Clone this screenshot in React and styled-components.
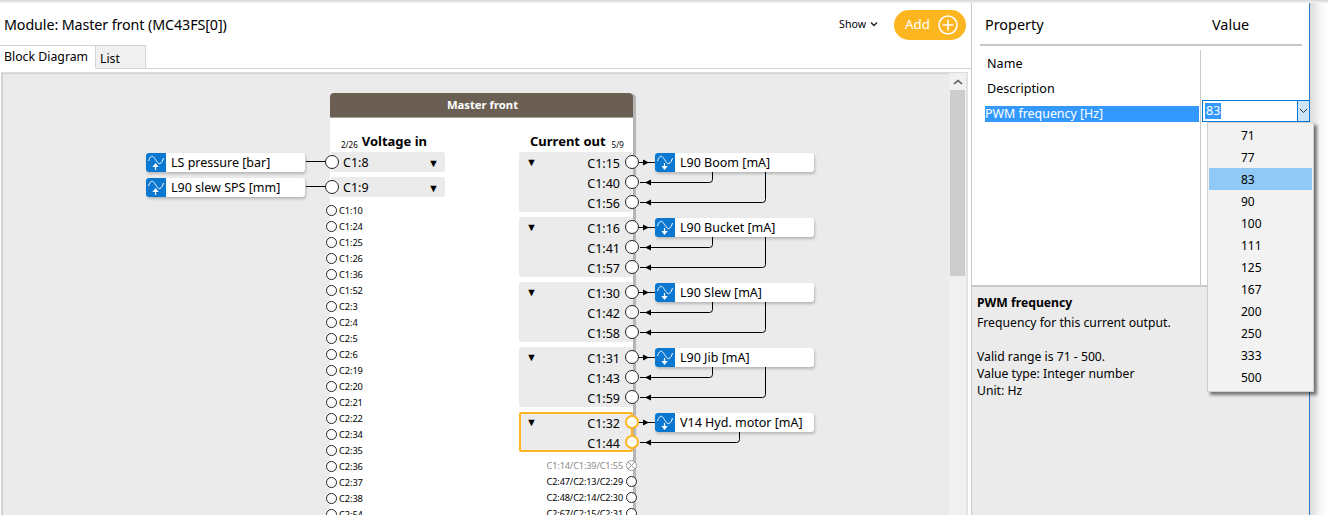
import React from 'react';
import styled, { createGlobalStyle } from 'styled-components';

const Global = createGlobalStyle`
  html, body { margin: 0; padding: 0; background: #fff; }
  body { font-family: "Noto Sans", "Open Sans", sans-serif; color: #000; }
  * { box-sizing: border-box; }
`;

const ORANGE = '#fdb61f';
const BLUE = '#0a78d1';

const Page = styled.div`
  width: 1328px; height: 515px; overflow: hidden;
  display: flex; flex-direction: column; background: #fff;
`;
const TopShade = styled.div`
  height: 3px; flex: none;
  background: linear-gradient(#d6d6d6, #f4f4f4);
`;
const Body = styled.div`flex: 1; display: flex; min-height: 0;`;
const Window = styled.div`
  width: 1310px; flex: none; display: flex;
  border-right: 1px solid #2b7cc4; background: #fff;
`;
const EdgeShade = styled.div`
  flex: 1; background: linear-gradient(90deg, #dcdcdc, #f6f6f6 55%, #fff);
`;

const LeftPane = styled.div`
  width: 972px; flex: none; display: flex; flex-direction: column;
  border-right: 1px solid #c8c8c8; min-height: 0;
`;
const Header = styled.div`
  height: 42px; flex: none; display: flex; align-items: center;
  padding: 0 5px 0 4px;
`;
const Title = styled.div`font-size: 14.3px; flex: 1; letter-spacing: -0.1px;`;
const ShowMenu = styled.div`
  display: flex; align-items: center; gap: 4px;
  font-size: 10.6px; margin-right: 16px;
`;
const AddButton = styled.div`
  width: 72px; height: 30px; border-radius: 15px; background: ${ORANGE};
  color: #fff; font-size: 13.4px; display: flex; align-items: center;
  justify-content: space-between; padding: 0 8px 2px 11px; margin-top: 2px;
`;
const Tabs = styled.div`
  height: 24px; flex: none; display: flex; align-items: flex-end;
  border-bottom: 1px solid #d4d4d4;
`;
const Tab = styled.div`
  font-size: 12.3px; height: ${p => (p.$active ? '24px' : '23px')};
  width: ${p => p.$w}px; padding: ${p => (p.$active ? '2px 0 0 4px' : '4px 0 0 4px')};
  background: ${p => (p.$active ? '#fff' : '#f0f0f0')};
  border: 1px solid #d4d4d4; border-left: none;
  border-bottom: ${p => (p.$active ? '1px solid #fff' : 'none')};
  margin-bottom: ${p => (p.$active ? '-1px' : '0')};
`;
const CanvasFrame = styled.div`
  flex: 1; min-height: 0; display: flex; margin: 3px 3px 0 1px;
  border-top: 1px solid #dcdcdc;
`;
const Canvas = styled.div`
  flex: 1; position: relative; overflow: hidden; background: #ebebeb;
  border-left: 2px solid #d2d2d2; box-shadow: inset 0 2px 1px -1px #d0d0d0;
`;
const Scrollbar = styled.div`
  width: 19px; flex: none; display: flex; flex-direction: column;
  background: #f0f0f0; border-right: 2px solid #e2e2e2; padding-right: 1px; padding-left: 1px;
`;
const ScrollUp = styled.div`height: 17px; display: flex; align-items: center; justify-content: center;`;
const ScrollThumb = styled.div`height: 186px; background: #cdcdcd;`;

const Module = styled.div`
  position: absolute; left: 327px; top: 20px; width: 303px; height: 480px;
  background: #fff; box-shadow: 3px 1px 1px #b4b4b4;
  border-radius: 4px 4px 0 0;
`;
const ModuleHead = styled.div`
  height: 25px; background: #6b5f53; color: #fff; border-radius: 4px 4px 0 0;
  font-size: 11.3px; font-weight: 700; text-align: center; line-height: 24px;
  border-bottom: 1px solid #a8a39d; padding-left: 2px;
`;
const ModuleBody = styled.div`
  display: flex; justify-content: space-between; padding-top: 14px;
`;
const Column = styled.div`width: ${p => p.$w}px; display: flex; flex-direction: column;`;
const ColTitle = styled.div`
  height: 20px; display: flex; align-items: center; gap: ${p => p.$gap}px; padding-left: 11px;
  padding-bottom: 2px;
  font-size: 13px; font-weight: 700; white-space: nowrap;
`;
const Tiny = styled.span`font-size: 8px; font-weight: 400; padding-top: 7px;`;

const Circle = styled.span`
  display: block; flex: none; border-radius: 50%; background: #fff;
  width: ${p => (p.$big ? 14 : 11)}px; height: ${p => (p.$big ? 14 : 11)}px;
  border: ${p => (p.$hot ? '2px' : p.$big ? '1.4px' : '1.2px')} solid ${p => (p.$hot ? ORANGE : '#222')};
  position: relative; z-index: 2;
`;
const InputRow = styled.div`
  position: relative; height: 20px; margin-bottom: 5px; background: #ebebeb;
  border-radius: 0 3px 3px 0; display: flex; align-items: center; font-size: 12.5px;
  margin-left: 1px;
`;
const InputPin = styled(Circle)`margin-left: -6px; margin-right: 4px;`;
const Caret = styled.span`font-size: 11px; line-height: 1;`;
const InputCaret = styled(Caret)`margin-left: auto; margin-right: 6px;`;
const SmallRow = styled.div`
  height: 16px; display: flex; align-items: center; gap: 2px; font-size: 9.3px;
  letter-spacing: -0.1px; margin-left: -4px;
`;
const Signal = styled.div`
  position: absolute; width: 159px; height: 19px; top: 1px; left: ${p => p.$left}px;
  background: #fff; border-radius: 3px; box-shadow: 1px 2px 3px rgba(0,0,0,.22);
  display: flex; align-items: center; font-size: 12.5px; gap: 5px; white-space: nowrap; z-index: 3;
`;
const SignalIcon = styled.span`
  width: 20px; height: 19px; flex: none; background: ${BLUE}; border-radius: 3px 0 0 3px;
  display: flex;
`;
const InputLine = styled.span`
  position: absolute; left: -25px; width: 20px; top: 9px; height: 1px; background: #000;
`;
const OutputGroup = styled.div`
  position: relative; height: ${p => p.$rows * 20}px; margin-bottom: 5px; background: #ebebeb;
  border-radius: 2px; padding-left: 6px;
  box-shadow: ${p => (p.$hot ? `inset 0 0 0 2px ${ORANGE}` : 'none')};
`;
const GroupCaret = styled(Caret)`position: absolute; left: 7px; top: 4px;`;
const OutputRow = styled.div`
  height: 20px; display: flex; align-items: center; justify-content: flex-end;
  gap: 5px; font-size: 12.5px; margin-right: -6px;
`;
const PinLabel = styled.span`padding-top: 2px;`;
const SpareRow = styled.div`
  height: 16px; display: flex; align-items: center; justify-content: flex-end; gap: 3px;
  font-size: 9.1px; letter-spacing: -0.1px; margin-right: -4px; white-space: nowrap;
  color: ${p => (p.$off ? '#8a8a8a' : '#000')};
`;
const Wires = styled.svg`
  position: absolute; left: 100%; top: 0; overflow: visible; z-index: 1;
`;

const RightPane = styled.div`
  flex: 1; position: relative; display: flex; flex-direction: column; min-width: 0;
`;
const PropHead = styled.div`
  height: 43px; flex: none; margin: 0 7px 0 8px; border-bottom: 2px solid #c8c8c8;
  display: flex; align-items: center; font-size: 14.4px; padding: 2px 0 0 5px;
`;
const PropName = styled.div`width: 227px;`;
const PropTable = styled.div`height: 239px; flex: none; display: flex; padding-top: 5px;`;
const PropNames = styled.div`
  width: 229px; padding-left: 13px; border-right: 1px solid #c8c8c8; margin-top: -1px;
  padding-top: 1px;
`;
const PropRow = styled.div`
  height: 25px; font-size: 12.6px; display: flex; align-items: center; padding-left: 2px;
`;
const PropSelected = styled.div`
  height: 16px; margin-top: 5px; font-size: 12.4px; line-height: 16px; margin-right: 1px;
  background: #3399ff; color: #fff;
`;
const Editor = styled.div`
  position: absolute; left: 230px; top: 97px; width: 108px; height: 22px;
  background: #fff; border: 1px solid #0078d7; display: flex; align-items: center; padding-left: 2px;
  font-size: 12.5px;
`;
const EditorValue = styled.span`background: #3399ff; color: #fff; padding: 0 1px; line-height: 16px;`;
const EditorButton = styled.span`
  margin-left: auto; width: 12px; height: 20px; background: #cce4f7; border-left: 1px solid #0078d7;
  display: flex; align-items: center; justify-content: center;
`;
const Dropdown = styled.div`
  position: absolute; left: 235px; top: 119px; width: 107px; height: 270px; z-index: 10;
  background: #f2f2f2; border: 1px solid #d0d0d0; padding: 1px;
  box-shadow: 3px 3px 3px rgba(0,0,0,.5);
`;
const DropItem = styled.div`
  height: 22px; font-size: 12px; display: flex; align-items: center; padding-left: 32px;
  background: ${p => (p.$sel ? '#90c8f6' : 'transparent')};
`;
const Help = styled.div`
  flex: 1; background: #ebebeb; border-top: 2px solid #c8c8c8; padding: 7px 5px; font-size: 12.2px;
  line-height: 17px;
`;
const HelpTitle = styled.div`font-weight: 700; margin-bottom: 3px;`;
const HelpLine = styled.div`min-height: 17px;`;

const Wave = ({ up }) => (
  <svg width="20" height="19" viewBox="0 0 20 19" fill="none">
    <path d="M2.5 8C4 3.5 6 2 8 4.5S12 11.5 14 10.5S16.5 8 17.5 5" stroke="#fff" strokeWidth="1" />
    {up
      ? <path d="M9.5 17V13M7.5 13.5L9.5 11L11.5 13.5Z" stroke="#fff" strokeWidth="1.2" fill="#fff" />
      : <path d="M9.5 10V14M7.5 13.5L9.5 16L11.5 13.5Z" stroke="#fff" strokeWidth="1.2" fill="#fff" />}
  </svg>
);

const SigNode = ({ label, left, up }) => (
  <Signal $left={left}>
    <SignalIcon><Wave up={up} /></SignalIcon>
    {label}
  </Signal>
);

const OutWires = ({ rows, x1, x2 }) => (
  <Wires width="140" height={rows * 20} fill="none">
    <path d="M6 10.5H22" stroke="#000" />
    <path d="M16 10.5L10 7.5V13.5Z" fill="#000" />
    <path d={`M${x1 + .5} 20V27.5Q${x1 + .5} 30.5 ${x1 - 2.5} 30.5H7`} stroke="#000" />
    <path d="M12 30.5L18 27.5V33.5Z" fill="#000" />
    {x2 && <>
      <path d={`M${x2 + .5} 20V47.5Q${x2 + .5} 50.5 ${x2 - 2.5} 50.5H7`} stroke="#000" />
      <path d="M12 50.5L18 47.5V53.5Z" fill="#000" />
    </>}
  </Wires>
);

const inputs = [
  ['C1:8', 'LS pressure [bar]'],
  ['C1:9', 'L90 slew SPS [mm]'],
];
const freeInputs = ['C1:10','C1:24','C1:25','C1:26','C1:36','C1:52','C2:3','C2:4','C2:5','C2:6','C2:19','C2:20','C2:21','C2:22','C2:34','C2:35','C2:36','C2:37','C2:38','C2:54'];
const outputs = [
  { pins: ['C1:15','C1:40','C1:56'], label: 'L90 Boom [mA]' },
  { pins: ['C1:16','C1:41','C1:57'], label: 'L90 Bucket [mA]' },
  { pins: ['C1:30','C1:42','C1:58'], label: 'L90 Slew [mA]' },
  { pins: ['C1:31','C1:43','C1:59'], label: 'L90 Jib [mA]' },
  { pins: ['C1:32','C1:44'], label: 'V14 Hyd. motor [mA]', hot: true },
];
const spares = ['C2:47/C2:13/C2:29','C2:48/C2:14/C2:30','C2:67/C2:15/C2:31'];
const freqs = [71,77,83,90,100,111,125,167,200,250,333,500];

export default function App() {
  return (
    <Page>
      <Global />
      <TopShade />
      <Body>
        <Window>
          <LeftPane>
            <Header>
              <Title>Module: Master front (MC43FS[0])</Title>
              <ShowMenu>
                Show
                <svg width="8" height="6" viewBox="0 0 8 6" fill="none"><path d="M1 1.5L4 4.5L7 1.5" stroke="#222" strokeWidth="1.4" /></svg>
              </ShowMenu>
              <AddButton>
                Add
                <svg width="20" height="20" viewBox="0 0 20 20" fill="none" stroke="#fff" strokeWidth="1.5" style={{ marginTop: 2 }}>
                  <circle cx="10" cy="10" r="9" /><path d="M10 4.5V15.5M4.5 10H15.5" />
                </svg>
              </AddButton>
            </Header>
            <Tabs>
              <Tab $active $w={96}>Block Diagram</Tab>
              <Tab $w={50}>List</Tab>
            </Tabs>
            <CanvasFrame>
              <Canvas>
                <Module>
                  <ModuleHead>Master front</ModuleHead>
                  <ModuleBody>
                    <Column $w={115}>
                      <ColTitle $gap={4}><Tiny>2/26</Tiny>Voltage in</ColTitle>
                      {inputs.map(([pin, label]) => (
                        <InputRow key={pin}>
                          <SigNode label={label} left={-185} up />
                          <InputLine />
                          <InputPin $big />
                          {pin}
                          <InputCaret>▼</InputCaret>
                        </InputRow>
                      ))}
                      {freeInputs.map(p => (
                        <SmallRow key={p}><Circle />{p}</SmallRow>
                      ))}
                    </Column>
                    <Column $w={114}>
                      <ColTitle $gap={6}>Current out<Tiny>5/9</Tiny></ColTitle>
                      {outputs.map(o => (
                        <OutputGroup key={o.label} $rows={o.pins.length} $hot={o.hot}>
                          <GroupCaret>▼</GroupCaret>
                          {o.pins.map(p => (
                            <OutputRow key={p}><PinLabel>{p}</PinLabel><Circle $big $hot={o.hot} /></OutputRow>
                          ))}
                          <OutWires rows={o.pins.length} x1={o.hot ? 106 : 79} x2={o.hot ? null : 132} />
                          <SigNode label={o.label} left={136} />
                        </OutputGroup>
                      ))}
                      <SpareRow $off>
                        C1:14/C1:39/C1:55
                        <svg width="11" height="11" viewBox="0 0 11 11" fill="#fff" stroke="#999" style={{ position: 'relative', zIndex: 2 }}>
                          <circle cx="5.5" cy="5.5" r="5" /><path d="M2 2L9 9M9 2L2 9" />
                        </svg>
                      </SpareRow>
                      {spares.map(s => (
                        <SpareRow key={s}>{s}<Circle /></SpareRow>
                      ))}
                    </Column>
                  </ModuleBody>
                </Module>
              </Canvas>
              <Scrollbar>
                <ScrollUp>
                  <svg width="10" height="6" viewBox="0 0 10 6" fill="none"><path d="M1 5L5 1.5L9 5" stroke="#555" strokeWidth="1.6" /></svg>
                </ScrollUp>
                <ScrollThumb />
              </Scrollbar>
            </CanvasFrame>
          </LeftPane>
          <RightPane>
            <PropHead>
              <PropName>Property</PropName>Value
            </PropHead>
            <PropTable>
              <PropNames>
                <PropRow>Name</PropRow>
                <PropRow>Description</PropRow>
                <PropSelected>PWM frequency [Hz]</PropSelected>
              </PropNames>
            </PropTable>
            <Editor>
              <EditorValue>83</EditorValue>
              <EditorButton>
                <svg width="9" height="6" viewBox="0 0 9 6" fill="none"><path d="M1 1L4.5 4.5L8 1" stroke="#333" /></svg>
              </EditorButton>
            </Editor>
            <Dropdown>
              {freqs.map(f => <DropItem key={f} $sel={f === 83}>{f}</DropItem>)}
            </Dropdown>
            <Help>
              <HelpTitle>PWM frequency</HelpTitle>
              <HelpLine>Frequency for this current output.</HelpLine>
              <HelpLine />
              <HelpLine>Valid range is 71 - 500.</HelpLine>
              <HelpLine>Value type: Integer number</HelpLine>
              <HelpLine>Unit: Hz</HelpLine>
            </Help>
          </RightPane>
        </Window>
        <EdgeShade />
      </Body>
    </Page>
  );
}
